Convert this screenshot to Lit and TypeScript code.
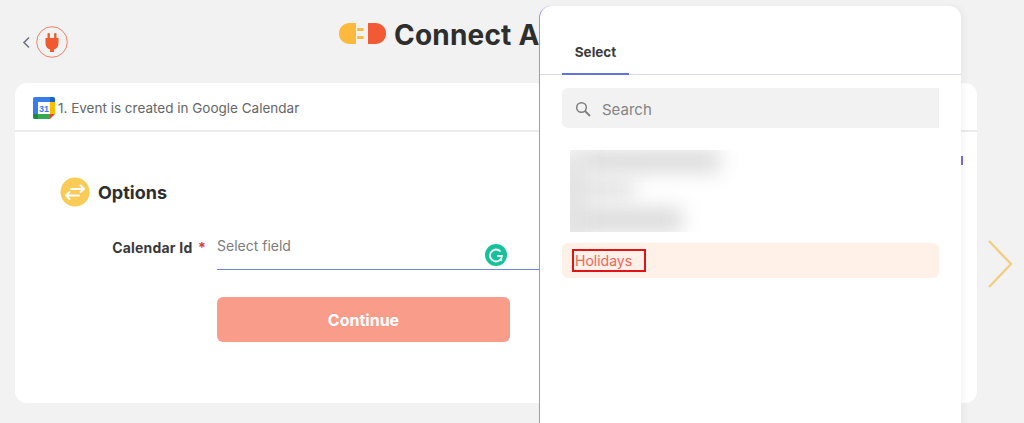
import { LitElement, html, css } from "lit";
import { customElement } from "lit/decorators.js";

@customElement("app-root")
export class AppRoot extends LitElement {
  static styles = css`
    :host { display: block; }
    * { box-sizing: border-box; }
    .page {
      position: relative; width: 1024px; height: 423px; overflow: hidden;
      background: #f2f2f2; font-family: "Inter", "Liberation Sans", sans-serif; color: #2b2b2b;
    }
    .top { height: 83px; display: flex; align-items: flex-start; padding-left: 22px; }
    .back { margin-top: 36px; width: 9px; height: 13px; flex: none; }
    .plug { margin-top: 26px; margin-left: 5px; width: 32px; height: 32px; flex: none; }
    .logo { margin-top: 23px; margin-left: 271px; width: 47px; height: 22px; flex: none; }
    .title {
      margin: 15px 0 0 8px; font-size: 28px; line-height: 40px;
      font-weight: 700; white-space: nowrap; letter-spacing: 0.2px; color: #2e2e2e;
    }
    .main { display: flex; padding-left: 15px; }
    .card { width: 962px; height: 320px; background: #fff; border-radius: 12px; overflow: hidden; flex: none; }
    .card-head {
      height: 49px; display: flex; align-items: center; gap: 3px; padding: 2px 0 0 18px;
      font-size: 13.5px; color: #666; border-bottom: 2px solid #ebebeb;
    }
    .card-body { padding: 45px 0 0 45px; }
    .section { display: flex; align-items: center; gap: 8px; font-size: 18px; font-weight: 700; height: 30px; color: #2e2e2e; }
    .field { display: flex; margin-top: 23px; }
    .label {
      width: 157px; padding: 9px 11px 0 0; font-size: 14px; font-weight: 700; text-align: right;
      color: #3a3a3a; letter-spacing: 0.2px;
    }
    .req { color: #e0393a; margin-left: 2px; }
    .input {
      position: relative; width: 322px; height: 40px; border-bottom: 1px solid #6f86e0;
      font-size: 14px; color: #7d7d7d; padding: 7px 0 0;
    }
    .grammarly { position: absolute; left: 268px; top: 14px; width: 22px; height: 22px; }
    .actions { padding-left: 157px; margin-top: 27px; }
    .btn {
      width: 293px; height: 45px; background: #f99d8a; border-radius: 6px; color: #fff;
      font-size: 16px; font-weight: 700; display: flex; align-items: center; justify-content: center;
    }
    .next { width: 25px; height: 48px; margin: 157px 0 0 11px; flex: none; }
    .panel {
      position: absolute; left: 539px; top: 6px; width: 422px; height: 440px; background: #fff;
      border-left: 1px solid #8f97ee; border-radius: 12px 12px 0 0;
      box-shadow: 3px 0 6px rgba(0,0,0,0.04);
    }
    .tabs { height: 69px; border-bottom: 1px solid #dcdce6; padding-left: 22px; display: flex; align-items: flex-end; }
    .tab {
      width: 67px; height: 69px; padding-top: 38px; text-align: center; font-size: 13.5px; font-weight: 700; color: #3a3a3a;
      border-bottom: 2px solid #6273dd; margin-bottom: -1px;
    }
    .search {
      margin: 13px 0 0 22px; width: 377px; height: 40px; background: #f2f2f2; border-radius: 6px 0 0 6px;
      display: flex; align-items: center; gap: 10px; padding: 2px 0 0 13px; color: #848484; font-size: 15px;
    }
    .blurred { position: relative; margin: 22px 0 0 30px; width: 200px; height: 82px; overflow: hidden; }
    .smear { position: absolute; background: #d9d9d9; filter: blur(10px); }
    .s1 { left: 10px; top: 0; width: 140px; height: 22px; }
    .s2 { left: -6px; top: 26px; width: 70px; height: 24px; background: #e4e4e4; }
    .s3 { left: -6px; top: 58px; width: 118px; height: 24px; }
    .s4 { left: -10px; top: 0; width: 26px; height: 90px; background: #e2e2e2; }
    .option {
      margin: 11px 0 0 22px; width: 377px; height: 35px; background: #fff0e8; border-radius: 6px;
      display: flex; align-items: center; padding-left: 10px; font-size: 14px; color: #f0675a;
    }
    .mark { width: 74px; height: 23px; border: 2px solid #e01414; padding-left: 1px; line-height: 19px; }
    .tick { position: absolute; left: 961px; top: 156px; width: 2px; height: 9px; background: #7a6fd0; }
  `;

  render() {
    return html`
      <div class="page">
        <div class="top">
          <svg class="back" viewBox="0 0 9 13"><path d="M7 1.5 2 6.5l5 5" fill="none" stroke="#6f7480" stroke-width="1.6"/></svg>
          <svg class="plug" viewBox="0 0 32 32">
            <circle cx="16" cy="16" r="15.3" fill="none" stroke="#f0826a" stroke-width="1"/>
            <path d="M9.500 12h13v5c0 3.500-2 6-4.500 6.600V26h-4v-2.400C11.500 23 9.500 20.500 9.500 17z" fill="#f15a2f"/>
            <rect x="11.500" y="7" width="2.400" height="6" rx="1" fill="#f15a2f"/>
            <rect x="18.100" y="7" width="2.400" height="6" rx="1" fill="#f15a2f"/>
          </svg>
          <svg class="logo" viewBox="0 0 47 22">
            <path d="M11 0h6v21h-6C4.500 21 0 16.500 0 10.500S4.500 0 11 0z" fill="#fdb93c"/>
            <rect x="18" y="5" width="6.500" height="3" rx="1" fill="#fdb93c"/>
            <rect x="18" y="13" width="6.500" height="3" rx="1" fill="#fdb93c"/>
            <path d="M29 0h7c6.500 0 11 4.500 11 10.500S42.500 21 36 21h-7z" fill="#f15a34"/>
          </svg>
          <div class="title">Connect A</div>
        </div>
        <div class="main">
          <div class="card">
            <div class="card-head">
              <svg width="22" height="22" viewBox="0 0 22 22">
                <path d="M2 0h16v5H5v13H0V2a2 2 0 0 1 2-2z" fill="#3b7de8"/>
                <path d="M17 0h3a2 2 0 0 1 2 2v3h-5z" fill="#1a5fd0"/>
                <rect x="17" y="5" width="5" height="12" fill="#fbbc04"/>
                <path d="M5 17h12v5H2a2 2 0 0 1-2-2v-3z" fill="#34a853"/>
                <path d="M0 17h5v5H2a2 2 0 0 1-2-2z" fill="#1d8a42"/>
                <path d="M17 17h5l-5 5z" fill="#ea4335"/>
                <rect x="5" y="5" width="12" height="12" fill="#fff"/>
                <text x="11" y="14.500" text-anchor="middle" font-family="Liberation Sans" font-size="9" font-weight="700" fill="#3b7de8">31</text>
              </svg>
              <span>1. Event is created in Google Calendar</span>
            </div>
            <div class="card-body">
              <div class="section">
                <svg width="30" height="30" viewBox="0 0 30 30">
                  <circle cx="15" cy="15" r="14.500" fill="#fbcb57"/>
                  <path d="M11 12h13M20.500 8.500 24 12l-3.500 3M19 18.500H6M9.500 15 6 18.500 9.500 22" fill="none" stroke="#fff" stroke-width="2" stroke-linecap="round" stroke-linejoin="round"/>
                </svg>
                <span>Options</span>
              </div>
              <div class="field">
                <div class="label">Calendar Id <span class="req">*</span></div>
                <div class="input">
                  Select field
                  <svg class="grammarly" viewBox="0 0 22 22">
                    <circle cx="11" cy="11" r="11" fill="#15c39a"/>
                    <path d="M15.500 7.500A6 6 0 1 0 17 12h-5M15 15l2 1.500" fill="none" stroke="#fff" stroke-width="1.800"/>
                  </svg>
                </div>
              </div>
              <div class="actions">
                <div class="btn">Continue</div>
              </div>
            </div>
          </div>
          <svg class="next" viewBox="0 0 25 48"><path d="M1 1l22 23L1 47" fill="none" stroke="#f3cd83" stroke-width="2.400"/></svg>
        </div>
        <div class="tick"></div>
        <div class="panel">
          <div class="tabs"><div class="tab">Select</div></div>
          <div class="search">
            <svg width="17" height="17" viewBox="0 0 17 17"><circle cx="6.500" cy="6.500" r="4.800" fill="none" stroke="#7d7d7d" stroke-width="1.500"/><path d="M10 10l5 5" stroke="#7d7d7d" stroke-width="1.800"/></svg>
            <span>Search</span>
          </div>
          <div class="blurred">
            <div class="smear s1"></div><div class="smear s2"></div><div class="smear s3"></div><div class="smear s4"></div>
          </div>
          <div class="option"><span class="mark">Holidays</span></div>
        </div>
      </div>
    `;
  }
}
